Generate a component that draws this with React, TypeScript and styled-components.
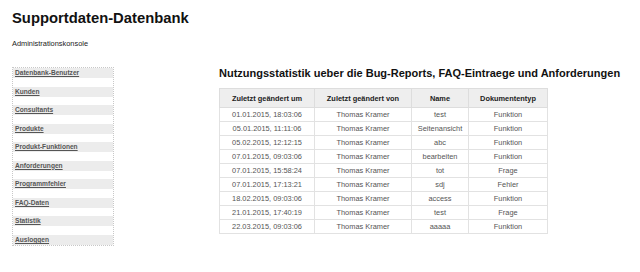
import React from 'react'
import styled, { createGlobalStyle } from 'styled-components'

const GlobalStyle = createGlobalStyle`
  html, body {
    margin: 0;
    padding: 0;
    background: #fff;
    font-family: 'Liberation Sans', Arial, sans-serif;
  }
`

const Page = styled.div`
  width: 640px;
  height: 272px;
  padding: 0 0 0 12px;
  box-sizing: border-box;
  overflow: hidden;
`

const Kopf = styled.header`
  padding-top: 9px;
  height: 59px;
  box-sizing: border-box;
`

const Titel = styled.h1`
  margin: 0;
  font-size: 14.8px;
  line-height: 18px;
  font-weight: 700;
  color: #111;
`

const Untertitel = styled.p`
  margin: 12px 0 0;
  font-size: 7.4px;
  line-height: 9px;
  color: #222;
`

const Inhalt = styled.div`
  display: flex;
  align-items: flex-start;
`

const Navigation = styled.nav`
  flex: 0 0 102px;
  width: 102px;
  margin-top: 8px;
  border: 1px dotted #c8c8c8;
  box-sizing: border-box;
  display: flex;
  flex-direction: column;
  gap: 8.55px;
`

const NavLink = styled.a`
  display: block;
  height: 10px;
  line-height: 10px;
  padding-left: 2px;
  background: #ececec;
  color: #555;
  font-size: 6.6px;
  font-weight: 700;
  text-decoration: underline;
`

const Bereich = styled.section`
  margin-left: 105px;
  margin-top: 7px;
`

const Ueberschrift = styled.h2`
  margin: 0 0 8px;
  font-size: 11px;
  line-height: 14px;
  font-weight: 700;
  color: #111;
  white-space: nowrap;
`

const Tabelle = styled.table`
  border-collapse: collapse;
  table-layout: fixed;
  width: 324px;
  font-size: 7.4px;
  color: #555;
`

const Kopfzelle = styled.th<{ $breite: number }>`
  width: ${(p) => p.$breite}px;
  height: 18px;
  padding: 0;
  background: #eee;
  border: 1px solid #ddd;
  color: #222;
  font-weight: 700;
  text-align: center;
`

const Zelle = styled.td`
  height: 13px;
  padding: 0;
  border: 1px solid #e2e2e2;
  text-align: center;
`

const menue = [
  'Datenbank-Benutzer',
  'Kunden',
  'Consultants',
  'Produkte',
  'Produkt-Funktionen',
  'Anforderungen',
  'Programmfehler',
  'FAQ-Daten',
  'Statistik',
  'Ausloggen',
]

const spalten = [
  { titel: 'Zuletzt geändert um', breite: 94 },
  { titel: 'Zuletzt geändert von', breite: 96 },
  { titel: 'Name', breite: 56 },
  { titel: 'Dokumententyp', breite: 78 },
]

const zeilen = [
  ['01.01.2015, 18:03:06', 'Thomas Kramer', 'test', 'Funktion'],
  ['05.01.2015, 11:11:06', 'Thomas Kramer', 'Seitenansicht', 'Funktion'],
  ['05.02.2015, 12:12:15', 'Thomas Kramer', 'abc', 'Funktion'],
  ['07.01.2015, 09:03:06', 'Thomas Kramer', 'bearbeiten', 'Funktion'],
  ['07.01.2015, 15:58:24', 'Thomas Kramer', 'tot', 'Frage'],
  ['07.01.2015, 17:13:21', 'Thomas Kramer', 'sdj', 'Fehler'],
  ['18.02.2015, 09:03:06', 'Thomas Kramer', 'access', 'Funktion'],
  ['21.01.2015, 17:40:19', 'Thomas Kramer', 'test', 'Frage'],
  ['22.03.2015, 09:03:06', 'Thomas Kramer', 'aaaaa', 'Funktion'],
]

const App: React.FC = () => {
  return (
    <Page>
      <GlobalStyle />
      <Kopf>
        <Titel>Supportdaten-Datenbank</Titel>
        <Untertitel>Administrationskonsole</Untertitel>
      </Kopf>
      <Inhalt>
        <Navigation>
          {menue.map((eintrag) => (
            <NavLink key={eintrag} href="#">
              {eintrag}
            </NavLink>
          ))}
        </Navigation>
        <Bereich>
          <Ueberschrift>
            Nutzungsstatistik ueber die Bug-Reports, FAQ-Eintraege und Anforderungen
          </Ueberschrift>
          <Tabelle>
            <thead>
              <tr>
                {spalten.map((s) => (
                  <Kopfzelle key={s.titel} $breite={s.breite}>
                    {s.titel}
                  </Kopfzelle>
                ))}
              </tr>
            </thead>
            <tbody>
              {zeilen.map((z, i) => (
                <tr key={i}>
                  {z.map((wert, j) => (
                    <Zelle key={j}>{wert}</Zelle>
                  ))}
                </tr>
              ))}
            </tbody>
          </Tabelle>
        </Bereich>
      </Inhalt>
    </Page>
  )
}

export default App
